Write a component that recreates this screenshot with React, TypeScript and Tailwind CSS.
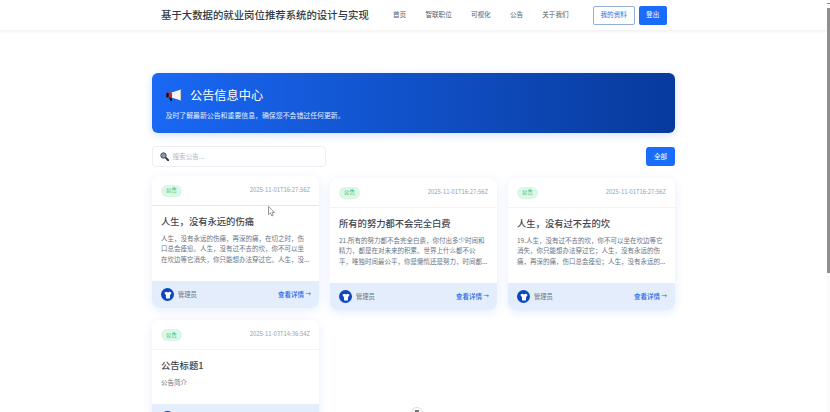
const navItems = ["首页", "智联职位", "可视化", "公告", "关于我们"];

const notices = [
  {
    time: "2025-11-01T16:27:56Z",
    title: "人生，没有永远的伤痛",
    body: "人生，没有永远的伤痛，再深的痛，在切之时，伤口总会痊愈。人生，没有过不去的坎，你不可以坐在坎边等它消失，你只能想办法穿过它。人生，没...",
    raised: true,
  },
  {
    time: "2025-11-01T16:27:56Z",
    title: "所有的努力都不会完全白费",
    body: "21.所有的努力都不会完全白费，你付出多少时间和精力，都是在对未来的积累。世界上什么都不公平，唯独时间最公平，你是懒惰还是努力，时间都...",
  },
  {
    time: "2025-11-01T16:27:56Z",
    title: "人生，没有过不去的坎",
    body: "19.人生，没有过不去的坎，你不可以坐在坎边等它消失，你只能想办法穿过它；人生，没有永远的伤痛，再深的痛，伤口总会痊愈；人生，没有永远的...",
  },
  {
    time: "2025-11-03T14:36:54Z",
    title: "公告标题1",
    body: "公告简介",
  },
];

function Megaphone() {
  return (
    <svg width="16" height="13" viewBox="0 0 16 13" className="shrink-0">
      <path d="M5.5 3.6 15 .6v10.8L5.5 8.6z" fill="#f3f3f3" />
      <path d="M15 .6v10.8l-1-.4V1z" fill="#c9c9c9" />
      <rect x="1.4" y="3.4" width="4.6" height="5.4" rx="1" fill="#d81e27" />
      <rect x="0.2" y="3.8" width="2.6" height="4.6" rx="1.2" fill="#151515" />
      <path d="M3 8.6h2.4l.9 3.2H4.2z" fill="#151515" />
    </svg>
  );
}

function Magnifier() {
  return (
    <svg width="9" height="9" viewBox="0 0 9 9" className="shrink-0">
      <path d="M5.4 5.4 8.2 8.2" stroke="#333b44" strokeWidth="2" strokeLinecap="round" />
      <circle cx="3.5" cy="3.5" r="2.7" fill="#8299b0" stroke="#48525d" strokeWidth="1" />
    </svg>
  );
}

function Shirt() {
  return (
    <svg width="8" height="8" viewBox="0 0 8 8">
      <path d="M2.5.7.6 1.6l.4 2 .9-.2.2 4h3.8l.2-4 .9.2.4-2L5.5.7C5 1.5 3 1.5 2.5.7z" fill="#fff" />
    </svg>
  );
}

function NoticeCard({ time, title, body, raised }: { time: string; title: string; body: string; raised?: boolean }) {
  return (
    <div
      className={`flex flex-col self-start overflow-hidden rounded-lg bg-white shadow-[0_2px_10px_rgba(37,99,235,0.12)] ${
        raised ? "-translate-y-[2px]" : ""
      }`}
    >
      <div
        className={`flex h-[30px] shrink-0 items-center justify-between border-b px-[9px] ${
          raised ? "border-[#e2e5ea]" : "border-[#f1f3f6]"
        }`}
      >
        <span className="flex h-[12px] w-[21px] items-center justify-center rounded-full bg-[#dcf7e6] text-[5.4px] text-[#22b866]">
          公告
        </span>
        <span className="text-[5.9px] text-[#9aa1ab]">{time}</span>
      </div>
      <div className="px-[9px] pb-[16.5px] pt-[8.5px]">
        <h3 className="text-[9.3px] font-medium leading-[13px] text-[#3d4551]">{title}</h3>
        <p className="mt-[5px] text-[6.5px] leading-[10.7px] text-[#6b7380]">{body}</p>
      </div>
      <div className="flex h-[27px] shrink-0 items-center justify-between bg-[#e3edfc] pl-[9px] pr-[8px]">
        <div className="flex items-center gap-[4px]">
          <span className="flex h-[13px] w-[13px] items-center justify-center rounded-full bg-[#0d47c4]">
            <Shirt />
          </span>
          <span className="text-[6.3px] text-[#6b7380]">管理员</span>
        </div>
        <span className="flex items-center gap-[1.5px] whitespace-nowrap text-[6.5px] font-medium text-[#2468e8]">
          查看详情
          <span className="text-[5.5px]">→</span>
        </span>
      </div>
    </div>
  );
}

export default function App() {
  return (
    <div className="relative flex h-screen overflow-hidden bg-white font-['Noto_Sans_CJK_SC','Noto_Sans',sans-serif]">
      <div className="min-w-0 flex-1">
        {/* top bar */}
        <header className="flex h-[30px] items-center bg-white pl-[161px] shadow-[0_1px_4px_rgba(0,0,0,0.08)]">
          <span className="w-[232px] shrink-0 whitespace-nowrap text-[10.4px] font-medium text-[#333a42]">
            基于大数据的就业岗位推荐系统的设计与实现
          </span>
          <nav className="flex gap-[19.2px] text-[6.6px] text-[#555c66]">
            {navItems.map((item) => (
              <span key={item} className="whitespace-nowrap">
                {item}
              </span>
            ))}
          </nav>
          <button className="ml-[24px] h-[19px] w-[42px] rounded-[2px] border border-[#8fb2dc] bg-white text-[6.6px] text-[#2b6fd6]">
            我的资料
          </button>
          <button className="ml-[4px] h-[19px] w-[28px] rounded-[2px] bg-[#1a6dfb] text-[6.6px] text-white">
            登出
          </button>
        </header>

        <main className="ml-[152px] w-[523px] pt-[43px]">
          <section className="flex h-[60px] flex-col justify-center rounded-md bg-gradient-to-r from-[#1a68f5] to-[#083a9c] pl-[13.5px] shadow-[0_2px_8px_rgba(37,99,235,0.2)]">
            <div className="flex items-center gap-[8.5px]">
              <Megaphone />
              <h1 className="text-[12.2px] leading-[18px] text-white">公告信息中心</h1>
            </div>
            <p className="mt-[6px] text-[6.9px] leading-[10px] text-[#e4edff]">及时了解最新公告和重要信息，确保您不会错过任何更新。</p>
          </section>

          <div className="mt-[13px] flex items-center justify-between">
            <div className="flex h-[21px] w-[174px] items-center gap-[3.5px] rounded border border-[#eceef1] bg-white pl-[7px]">
              <Magnifier />
              <span className="text-[6.6px] text-[#b3b8bf]">搜索公告...</span>
            </div>
            <button className="h-[19px] w-[29px] rounded-[3px] bg-[#1a6dfb] text-[6.6px] text-white">全部</button>
          </div>

          <div className="mt-[11px] grid grid-cols-3 gap-x-[11px] gap-y-[10px]">
            {notices.map((notice) => (
              <NoticeCard key={notice.title} {...notice} />
            ))}
          </div>
        </main>
      </div>

      {/* scrollbar */}
      <div className="flex w-[3px] shrink-0 flex-col bg-[#fafafa] pt-[3px]">
        <div className="h-[1px] bg-[#8f8f8f]" />
        <div className="mt-[4px] h-[265px] bg-[#8f8f8f]" />
      </div>

      {/* pointer and floating button caught in the capture */}
      <svg width="7" height="11" viewBox="0 0 7 11" className="absolute left-[268px] top-[206px]">
        <path d="M.5.5v8l2-1.6L3.8 10l1.4-.6L4 6.4h2.6z" fill="#fff" stroke="#555" strokeWidth="0.6" />
      </svg>
      <div className="absolute left-[411px] top-[407px] flex h-[12px] w-[12px] justify-center rounded-full border border-[#d8dbe0] bg-white pt-[2px]">
        <div className="h-[2px] w-[4px] bg-[#777]" />
      </div>
    </div>
  );
}
